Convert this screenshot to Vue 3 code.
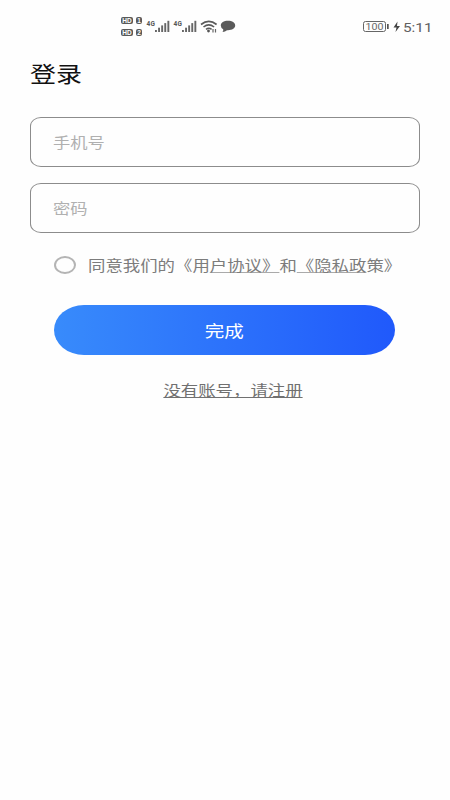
<script setup>
import { ref } from 'vue'
const phone = ref('')
const password = ref('')
const agreed = ref(false)
const bars = [0, 1, 2, 3, 4]
</script>

<template>
  <main class="screen">
    <header class="status">
      <svg class="signals" width="118" height="24" viewBox="0 0 118 24">
        <g fill="#5a5a5a">
          <rect x="1" y="2" width="12" height="7" rx="2" />
          <rect x="16" y="2" width="6" height="7" rx="2" />
          <rect x="1" y="14" width="12" height="7" rx="2" />
          <rect x="16" y="14" width="6" height="7" rx="2" />
        </g>
        <g class="badge">
          <text x="2.2" y="8" textLength="9.6">HD</text>
          <text x="17.2" y="8">1</text>
          <text x="2.2" y="20" textLength="9.6">HD</text>
          <text x="17.2" y="20">2</text>
        </g>
        <text class="net" x="26.5" y="11" textLength="8.5">4G</text>
        <text class="net" x="53.5" y="11" textLength="8.5">4G</text>
        <g fill="#666">
          <rect v-for="i in bars" :key="i" :x="35 + i * 3.1" :y="15 - i * 2.3" width="1.9" :height="2 + i * 2.3" />
          <rect v-for="i in bars" :key="'b' + i" :x="62 + i * 3.1" :y="15 - i * 2.3" width="1.9" :height="2 + i * 2.3" />
        </g>
        <g fill="none" stroke="#5a5a5a" stroke-width="1.6">
          <path d="M81 9.5Q88.800 3.300 96.600 9.500" />
          <path d="M83.500 12Q88.800 7.700 94.100 12" />
          <path d="M86 14.300Q88.800 12.200 91.600 14.300" />
        </g>
        <circle cx="88.500" cy="16" r="1.400" fill="#555" />
        <path d="M93 14v3.500M95.500 14v3.500" stroke="#666" stroke-width="1.200" />
        <path d="M108 5.800c4.200 0 7.200 2 7.200 4.700s-3 4.700-7.200 4.700l-1 0q-2 1.900-4.500 1.800 1-1.100.7-2.700-2.400-1.400-2.400-3.800c0-2.700 3-4.700 7.200-4.700z" fill="#5a5a5a" />
      </svg>
      <svg class="power" width="72" height="24" viewBox="0 0 72 24">
        <rect x="1.500" y="6.500" width="22" height="10" rx="2" fill="none" stroke="#666" />
        <rect x="25" y="9" width="1.700" height="5" fill="#555" />
        <text class="level" x="3.500" y="15" textLength="18" lengthAdjust="spacingAndGlyphs">100</text>
        <path d="M35.500 6.500L31.500 12.500h3l-1 4.500 4.500-6h-3z" fill="#444" />
        <text class="clock" x="41" y="16.500" textLength="29.500" lengthAdjust="spacingAndGlyphs">5:11</text>
      </svg>
    </header>

    <h1 class="title"><span class="wide">登录</span></h1>

    <form class="form" @submit.prevent>
      <label class="field"><input v-model="phone" class="wide" type="tel" placeholder="手机号" /></label>
      <label class="field"><input v-model="password" class="wide" type="password" placeholder="密码" /></label>
      <div class="agree">
        <button type="button" class="radio" aria-label="同意" :aria-pressed="agreed" @click="agreed = !agreed"></button>
        <span class="wide terms">同意我们的《用<a>户协议》</a>和<a>《隐私政</a>策》</span>
      </div>
      <button class="submit" type="submit"><span class="wide">完成</span></button>
    </form>
    <div class="register"><a class="wide">没有账号，请注册</a></div>
  </main>
</template>

<style>
body {
  background: #fefefe;
}
</style>

<style scoped>
.screen {
  box-sizing: border-box;
  width: 450px;
  height: 800px;
  overflow: hidden;
  padding: 15px 30px 0;
  background: #fefefe;
  font-family: "Noto Sans CJK SC", sans-serif;
}
.wide {
  display: inline-block;
  transform: scaleX(1.2);
  transform-origin: left center;
  white-space: nowrap;
}
.status {
  display: flex;
  justify-content: space-between;
  height: 24px;
  margin: 0 -13px 0 90px;
}
svg {
  display: block;
}
.badge {
  fill: #fff;
  font: bold 6.5px "Liberation Sans", sans-serif;
}
.net {
  fill: #555;
  font: bold 6.5px Roboto, sans-serif;
}
.level {
  fill: #666;
  font: 9.5px Roboto, sans-serif;
}
.power {
  margin-right: -1px;
}
.clock {
  fill: #606060;
  font: 13px Roboto, sans-serif;
}
.title {
  height: 32px;
  margin: 18px 0 0;
  color: #111;
  font-size: 21.7px;
  font-weight: 400;
  line-height: 32px;
}
.form {
  display: flex;
  flex-direction: column;
  margin-top: 28px;
}
.field {
  box-sizing: border-box;
  height: 50px;
  margin-bottom: 16px;
  padding: 0 22px;
  border: 1px solid #8c8c8c;
  border-radius: 11px / 9px;
}
.field input {
  display: block;
  width: 280px;
  height: 47px;
  padding: 0;
  border: 0;
  outline: 0;
  background: transparent;
  color: #333;
  font: 14.4px "Noto Sans CJK SC", sans-serif;
}
.field input::placeholder {
  color: #b0b0b0;
  opacity: 1;
}
.agree {
  display: flex;
  align-items: center;
  height: 32px;
  padding-left: 24px;
}
.radio {
  box-sizing: border-box;
  flex: none;
  width: 22px;
  height: 18px;
  padding: 0;
  border: 2.5px solid #b4b4b4;
  border-radius: 50%;
  background: transparent;
}
.terms {
  margin: 0 0 1px 12px;
  color: #7c7c7c;
  font-size: 14.5px;
  line-height: 24px;
}
.terms a,
.register a {
  text-decoration: underline;
  text-decoration-thickness: 1px;
  text-decoration-skip-ink: none;
  text-underline-offset: 1px;
}
.terms a {
  text-decoration-color: #aaa;
}
.submit {
  height: 50px;
  margin: 24px 25px 0 24px;
  padding: 0;
  border: 0;
  border-radius: 30px / 25px;
  background: linear-gradient(90deg, #388bfb, #2059fb);
  color: #fff;
  font: 16.3px "Noto Sans CJK SC", sans-serif;
}
.submit .wide,
.register .wide {
  transform-origin: center;
}
.register {
  margin-top: 23px;
  padding-left: 15px;
  color: #707070;
  font-size: 14.5px;
  line-height: 24px;
  text-align: center;
}
</style>
